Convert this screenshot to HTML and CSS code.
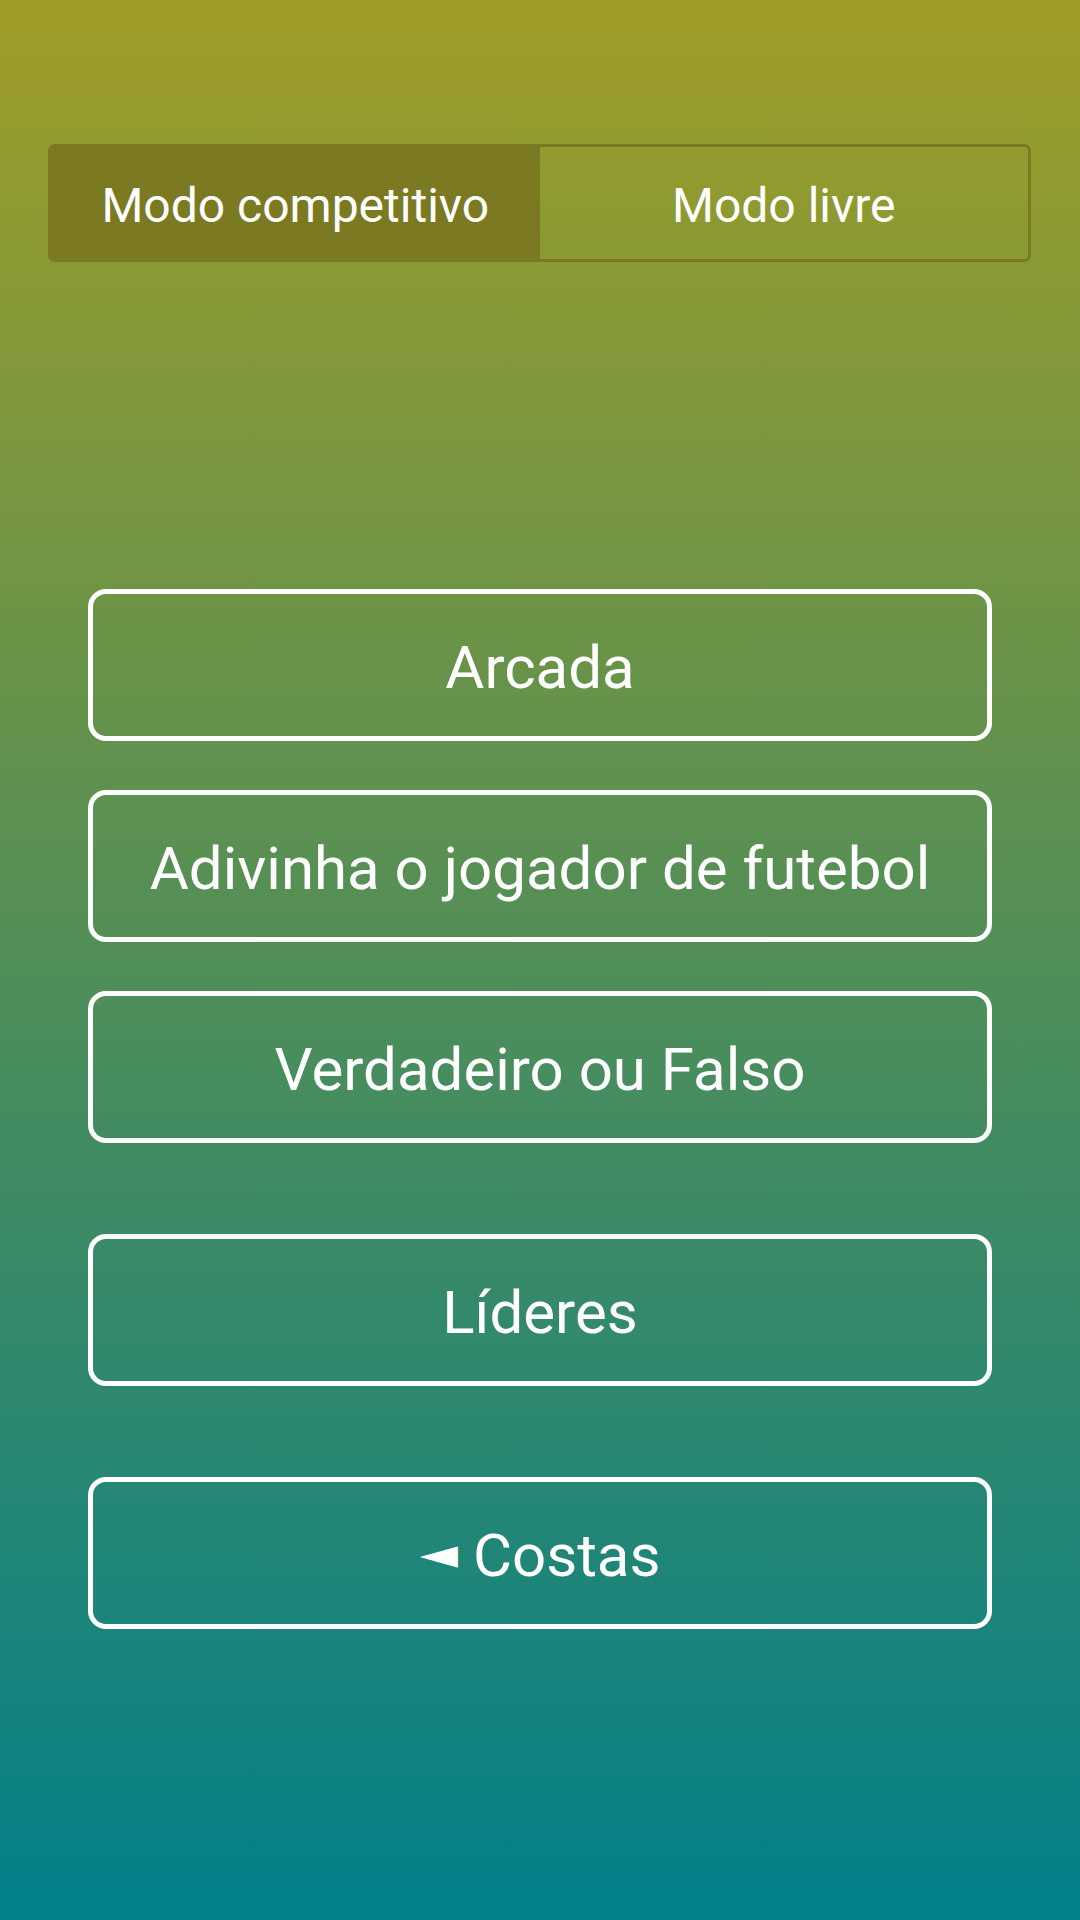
FILE: index.html
```html
<!DOCTYPE html>
<html lang="pt">
<head>
    <meta charset="UTF-8">
    <meta name="viewport" content="width=device-width, initial-scale=1.0">
    <title>Futebol Quiz</title>
    <link rel="stylesheet" href="styles.css">
</head>
<body>
    <div class="screen">
        <div class="tabs">
            <button class="tab active">Modo competitivo</button>
            <button class="tab">Modo livre</button>
        </div>

        <div class="menu">
            <div class="group">
                <button class="menu-btn">Arcada</button>
                <button class="menu-btn">Adivinha o jogador de futebol</button>
                <button class="menu-btn">Verdadeiro ou Falso</button>
            </div>
            <button class="menu-btn">Líderes</button>
            <button class="menu-btn"><span class="arrow">◄</span> Costas</button>
        </div>
    </div>
</body>
</html>
```

FILE: styles.css
```css
body {
    margin: 0;
    padding: 0;
    font-family: Roboto, "Noto Sans", Arial, sans-serif;
    color: white;
}

.screen {
    height: 1920px;
    box-sizing: border-box;
    padding-top: 144px;
    background: linear-gradient(to bottom, #9f9d26, #02808a);
}

.tabs {
    display: flex;
    margin: 0 49px 0 48px;
    height: 118px;
    box-sizing: border-box;
    border: 3px solid #7b7921;
    border-radius: 7px;
    overflow: hidden;
}

.tab {
    flex: 1;
    padding: 4px 0 0;
    background: transparent;
    border: none;
    color: white;
    font-family: inherit;
    font-size: 48px;
}

.tab.active {
    background: #7b7921;
}

.menu {
    display: flex;
    flex-direction: column;
    gap: 91px;
    margin-top: 327px;
    padding: 0 88px;
}

.group {
    display: flex;
    flex-direction: column;
    gap: 49px;
}

.menu-btn {
    height: 152px;
    padding: 5px 0 0;
    background: transparent;
    border: 5px solid white;
    border-radius: 18px;
    color: white;
    font-family: inherit;
    font-size: 60px;
}

.arrow {
    display: inline-block;
    font-family: "DejaVu Sans", sans-serif;
    font-size: 50px;
    transform: scaleY(0.85);
    vertical-align: 5px;
}
```
